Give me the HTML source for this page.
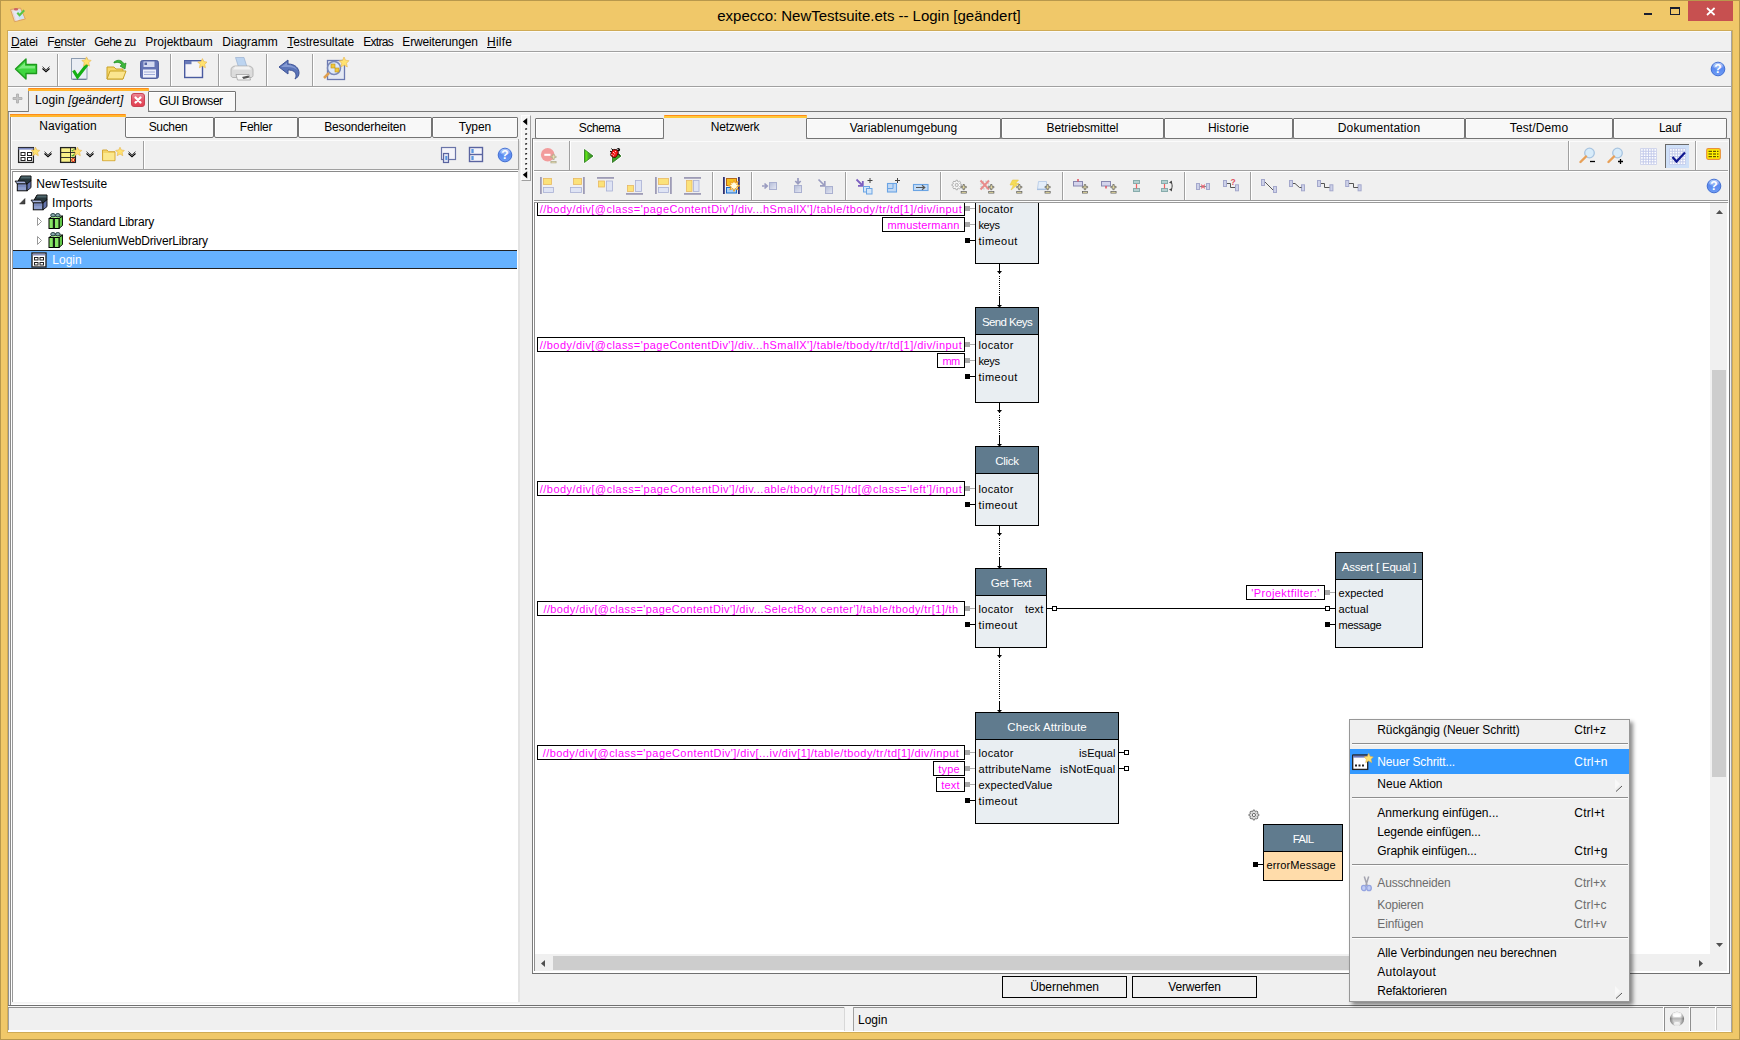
<!DOCTYPE html><html lang="de"><head><meta charset="utf-8"><title>expecco</title><style>
*{box-sizing:border-box;margin:0;padding:0}
html,body{width:1740px;height:1040px;overflow:hidden}
body{background:#f0c869;font-family:"Liberation Sans",sans-serif;font-size:12px;color:#000;position:relative}
.a{position:absolute}
.t{position:absolute;white-space:nowrap;line-height:14px;height:14px}
.u{text-decoration:underline}
.hl{position:absolute;height:1px}
.vl{position:absolute;width:1px}
.tab{position:absolute;border:1px solid #8a8a8a;border-bottom:none;background:#f7f7f7;text-align:center;white-space:nowrap}
.mag{color:#ee00ee}
.pin{position:absolute;white-space:nowrap;line-height:14px;height:14px;font-size:11px}
.box{position:absolute;border:1px solid #000;background:#fff;color:#f0f;white-space:nowrap;line-height:14px;font-size:11px;text-align:center}
.node{position:absolute;border:1px solid #000;background:#e9eef2}
.nh{position:absolute;left:0;top:0;right:0;background:#607b8e;color:#fff;text-align:center;border-bottom:1px solid #000;white-space:nowrap}
.mi{position:absolute;left:27.3px;white-space:nowrap;height:16px;line-height:16px}
.mk{position:absolute;left:224.3px;white-space:nowrap;height:16px;line-height:16px}
</style></head><body>
<div class="a" style="left:0px;top:0px;width:1740px;height:1040px;background:#b8984c;"></div>
<div class="a" style="left:1px;top:1px;width:1738px;height:1038px;background:#f0c869;"></div>
<div class="a" style="left:7px;top:30px;width:1726px;height:1003px;background:#cfab56;"></div>
<div class="a" style="left:8px;top:31px;width:1724px;height:1001px;background:#f0f0f0;"></div>
<div class="hl" style="left:8px;top:31px;width:1724px;background:#fbfbfb"></div>
<div class="t" style="left:-1px;top:7px;width:1740px;text-align:center;font-size:15px;line-height:18px;height:18px;letter-spacing:-0.02px">expecco: NewTestsuite.ets -- Login [geändert]</div>
<div class="a" style="left:1688px;top:1px;width:45px;height:20px;background:#c75050;"></div>
<svg class="a" style="left:1640px;top:0" width="100" height="22" viewBox="0 0 100 22"><rect x="4" y="13" width="8" height="2" fill="#1a1f30"/><rect x="30.500" y="8.500" width="9" height="6" fill="none" stroke="#1a1f30" stroke-width="1"/><rect x="30" y="7" width="10" height="2" fill="#1a1f30"/><path d="M67 8l7.600 7M74.600 8l-7.600 7" stroke="#fff" stroke-width="1.700"/></svg>
<svg class="a" style="left:8px;top:5px" width="20" height="18" viewBox="8 5 20 18"><path d="M10.500 9.500l10-1.500 4.800 11-10.800 2.700z" fill="#ead8cc" stroke="#dca060" stroke-width="1"/><path d="M13 11l7.500-1 3.800 8.300-8.300 2z" fill="#cfe4f6"/><path d="M13 11l4-0.500 2 9.500-2.700 0.600z" fill="#e6e6f2"/><ellipse cx="16" cy="9.300" rx="2.200" ry="1.300" fill="#cc6464"/><path d="M17.300 12.700l2.300 2.500 4.600-5" fill="none" stroke="#5cc444" stroke-width="2.100"/></svg>
<div class="t" style="left:11px;top:35px;letter-spacing:-0.263px;"><span class="u">D</span>atei</div>
<div class="t" style="left:47.3px;top:35px;letter-spacing:-0.382px;">F<span class="u">e</span>nster</div>
<div class="t" style="left:94.3px;top:35px;letter-spacing:-0.563px;">Gehe zu</div>
<div class="t" style="left:145.3px;top:35px;letter-spacing:0.004px;">Projektbaum</div>
<div class="t" style="left:222.3px;top:35px;letter-spacing:0.005px;">Diagramm</div>
<div class="t" style="left:287.3px;top:35px;letter-spacing:-0.101px;"><span class="u">T</span>estresultate</div>
<div class="t" style="left:363.3px;top:35px;letter-spacing:-0.717px;">Extras</div>
<div class="t" style="left:402.3px;top:35px;letter-spacing:-0.152px;">Erweiterungen</div>
<div class="t" style="left:487px;top:35px;letter-spacing:0.257px;"><span class="u">H</span>ilfe</div>
<div class="hl" style="left:8px;top:51px;width:1724px;background:#a0a0a0"></div>
<div class="hl" style="left:8px;top:52px;width:1724px;background:#ffffff"></div>
<div class="vl" style="left:57px;top:54px;height:32px;background:#a0a0a0"></div>
<div class="vl" style="left:58px;top:54px;height:32px;background:#ffffff"></div>
<div class="vl" style="left:170px;top:54px;height:32px;background:#a0a0a0"></div>
<div class="vl" style="left:171px;top:54px;height:32px;background:#ffffff"></div>
<div class="vl" style="left:218px;top:54px;height:32px;background:#a0a0a0"></div>
<div class="vl" style="left:219px;top:54px;height:32px;background:#ffffff"></div>
<div class="vl" style="left:266px;top:54px;height:32px;background:#a0a0a0"></div>
<div class="vl" style="left:267px;top:54px;height:32px;background:#ffffff"></div>
<div class="vl" style="left:312px;top:54px;height:32px;background:#a0a0a0"></div>
<div class="vl" style="left:313px;top:54px;height:32px;background:#ffffff"></div>
<div class="hl" style="left:8px;top:86px;width:1724px;background:#a0a0a0"></div>
<div class="hl" style="left:8px;top:87px;width:1724px;background:#ffffff"></div>
<svg class="a" style="left:0;top:0" width="0" height="0"><defs><linearGradient id="hg" x1="0" y1="0" x2="0" y2="1"><stop offset="0" stop-color="#8cb0f6"/><stop offset="0.450" stop-color="#5a8af0"/><stop offset="1" stop-color="#6e9cf4"/></linearGradient></defs></svg>
<svg class="a" style="left:14px;top:57px" width="24" height="24" viewBox="0 0 24 24"><path d="M1.5 12L12 2v5.5h10.5v9H12V22z" fill="#3fd63f" stroke="#1e9a1e" stroke-width="1.4" stroke-linejoin="round"/><path d="M4 12L11 5.5v3.5h10v2.5H8z" fill="#8df08d" opacity="0.8"/></svg>
<svg class="a" style="left:41.5px;top:65.5px" width="8" height="7" viewBox="0 0 8 7"><path d="M0.500 0.600l3.500 3.300 3.500-3.300" fill="none" stroke="#333" stroke-width="0.900"/><path d="M0.500 2.500l3.500 3.300 3.500-3.300" fill="none" stroke="#000" stroke-width="1.200"/></svg>
<svg class="a" style="left:69px;top:56px" width="24" height="26" viewBox="0 0 24 26"><rect x="2.500" y="2.500" width="15.500" height="20.500" fill="#e9edf4" stroke="#8d9cb0"/><path d="M17.500 23.500h-14" stroke="#70809a"/><path d="M4.500 14.500l4 6.500 10-13" fill="none" stroke="#14b014" stroke-width="3.200"/><path d="M17.5 0.9000000000000004l1.4 3.0 3.2 0.5-2.3 2.3 0.7 3.4-3.0-1.8-3.0 1.8 0.7-3.4-2.3-2.3 3.2-0.5z" fill="#ffe270" stroke="#e8b448" stroke-width="0.6"/></svg>
<svg class="a" style="left:105px;top:56px" width="24" height="26" viewBox="0 0 24 26"><path d="M2 11h7l2 2h7v10H2z" fill="#f6d76a" stroke="#c9a227"/><path d="M2 23l3-8h16l-3 8z" fill="#fbe58f" stroke="#c9a227"/><path d="M9 6c4-3 8-2 10 2l2-1-1 6-5-3 2-1c-2-3-5-3-8-2z" fill="#3cb83c" stroke="#1e8a1e" stroke-width="0.7"/></svg>
<svg class="a" style="left:140px;top:60px" width="19" height="19" viewBox="0 0 19 19"><rect x="0.600" y="0.600" width="17.800" height="17.800" rx="1.800" fill="#6474b4" stroke="#4a5a9a"/><rect x="3.500" y="1.500" width="11" height="5.500" fill="#d4daf0"/><rect x="3" y="9.500" width="13" height="8" fill="#eef0fa"/><path d="M4 12h11M4 14.500h11" stroke="#a0acd8"/><rect x="4.500" y="2.500" width="2.500" height="2.500" fill="#5464a4"/></svg>
<svg class="a" style="left:183px;top:56px" width="26" height="26" viewBox="0 0 26 26"><rect x="1.700" y="4.700" width="17.800" height="16.800" fill="#f6f4f8" stroke="#4a5aa0" stroke-width="1.400"/><rect x="2" y="5" width="6.500" height="3.200" fill="#6a7ab8"/><path d="M19.4 2.6000000000000005l1.4 3.0 3.2 0.5-2.3 2.3 0.7 3.4-3.0-1.8-3.0 1.8 0.7-3.4-2.3-2.3 3.2-0.5z" fill="#ffe270" stroke="#e8b448" stroke-width="0.6"/></svg>
<svg class="a" style="left:229px;top:56px" width="26" height="26" viewBox="0 0 26 26"><path d="M6.500 1.500h8.500l3 9.500H9.500z" fill="#bcd4f0" stroke="#9ab0d0" stroke-width="0.700"/><path d="M2 14c0-2.500 2-4 4.500-4h13c2.500 0 4.500 1.500 4.500 4v5.500c0 1-1 2-2 2H4c-1 0-2-1-2-2z" fill="#dcdcdc" stroke="#a8a8a8" stroke-width="0.800"/><path d="M6 10.500h14l2 3H4z" fill="#f2f2f2"/><path d="M7 18.500h13l1.500 5.500H8.500z" fill="#f6f6f6" stroke="#9a9a9a" stroke-width="0.700"/><path d="M13 21l6.500-1.500 1 2-6 1.500z" fill="#555"/></svg>
<svg class="a" style="left:278px;top:58px" width="24" height="24" viewBox="0 0 24 24"><path d="M1 9l9-7v4c7 0 11 4 11 9 0 3-2 5-4 6 1-2 1-3 1-4 0-3-3-5-8-5v4z" fill="#5a74b8" stroke="#3d5296" stroke-width="1" stroke-linejoin="round"/><path d="M3 9l6-4.5v2.500c5 0 9 2 10 5-2-2-5-3-10-3z" fill="#8fa4da" opacity="0.8"/></svg>
<svg class="a" style="left:322px;top:56px" width="28" height="26" viewBox="0 0 28 26"><rect x="5.500" y="4.500" width="17" height="19" fill="#e4e9f4" stroke="#6a78b0" stroke-width="1.300"/><circle cx="12" cy="12" r="6.500" fill="#dce8fa" fill-opacity="0.8" stroke="#7a88b8" stroke-width="1.500"/><path d="M7 17l-5 5" stroke="#e0a050" stroke-width="2.500"/><rect x="9" y="8" width="4" height="4" fill="#f2c83a" stroke="#b8901c" stroke-width="0.600"/><rect x="13" y="12" width="4" height="4" fill="#f2c83a" stroke="#b8901c" stroke-width="0.600"/><path d="M22 1l1.5 3.2 3.5 0.5-2.5 2.5 0.8 3.8-3.2-2.0-3.2 2.0 0.8-3.8-2.5-2.5 3.5-0.5z" fill="#ffe270" stroke="#e8b448" stroke-width="0.6"/></svg>
<svg class="a" style="left:1710px;top:61px" width="16" height="16" viewBox="0 0 16 16"><circle cx="8" cy="8" r="7.600" fill="#cfe6fc" opacity="0.700"/><circle cx="8" cy="8" r="6.800" fill="url(#hg)" stroke="#3e68cc" stroke-width="0.900"/><ellipse cx="8" cy="4.800" rx="4.800" ry="3" fill="#fff" opacity="0.300"/><text x="8" y="12.300" font-family="Liberation Sans,sans-serif" font-weight="bold" font-size="12" fill="#fff" text-anchor="middle">?</text></svg>
<svg class="a" style="left:12px;top:93px" width="11" height="11" viewBox="0 0 11 11"><path d="M4.500 1h2v3.500h3.500v2H6.500v3.500h-2V6.500H1v-2h3.500z" fill="#c4c4c4" stroke="#a8a8a8" stroke-width="0.800"/></svg>
<div class="hl" style="left:8px;top:111px;width:1723px;background:#787878"></div>
<div class="a" style="left:148px;top:91px;width:88px;height:21px;border:1px solid #747474;border-radius:1px 1px 2px 2px;background:#f8f8f8;box-shadow:inset 1px 1px 0 #ffffff"></div>
<div class="t" style="left:146.8px;top:94px;letter-spacing:-0.452px;width:88px;text-align:center">GUI Browser</div>
<div class="a" style="left:28px;top:90px;width:120px;height:22px;background:#f0f0f0;border-left:1px solid #8a8a8a"></div>
<div class="a" style="left:28px;top:88px;width:121px;height:1px;background:#ff8c1a;border-radius:2px 2px 0 0"></div>
<div class="a" style="left:28px;top:89px;width:121px;height:2px;background:#ffb62e;"></div>
<div class="t" style="left:35px;top:93px;letter-spacing:0.100px;">Login <i>[geändert]</i></div>
<svg class="a" style="left:131px;top:93px" width="14" height="14" viewBox="0 0 14 14"><defs><linearGradient id="cg" x1="0" y1="0" x2="0" y2="1"><stop offset="0" stop-color="#ec8a98"/><stop offset="0.5" stop-color="#e4566a"/><stop offset="1" stop-color="#e2404e"/></linearGradient></defs><rect x="0.500" y="0.500" width="13" height="13" rx="2.500" fill="url(#cg)" stroke="#c84454"/><path d="M4.500 4.500l5 5M9.500 4.500l-5 5" stroke="#fff" stroke-width="2.300" stroke-linecap="round"/></svg>
<div class="vl" style="left:8px;top:112px;height:894px;background:#909090"></div>
<div class="vl" style="left:10px;top:114px;height:891px;background:#8a8a8a"></div>
<div class="hl" style="left:8px;top:1005px;width:1723px;background:#6a6a6a"></div>
<div class="a" style="left:125px;top:117px;width:89px;height:21px;border:1px solid #747474;border-radius:1px 1px 2px 2px;background:#f8f8f8;box-shadow:inset 1px 1px 0 #ffffff"></div>
<div class="t" style="left:123.5px;top:120px;letter-spacing:-0.331px;width:89px;text-align:center">Suchen</div>
<div class="a" style="left:214px;top:117px;width:84px;height:21px;border:1px solid #747474;border-radius:1px 1px 2px 2px;background:#f8f8f8;box-shadow:inset 1px 1px 0 #ffffff"></div>
<div class="t" style="left:214px;top:120px;letter-spacing:-0.286px;width:84px;text-align:center">Fehler</div>
<div class="a" style="left:298px;top:117px;width:134px;height:21px;border:1px solid #747474;border-radius:1px 1px 2px 2px;background:#f8f8f8;box-shadow:inset 1px 1px 0 #ffffff"></div>
<div class="t" style="left:298px;top:120px;letter-spacing:-0.168px;width:134px;text-align:center">Besonderheiten</div>
<div class="a" style="left:432px;top:117px;width:86px;height:21px;border:1px solid #747474;border-radius:1px 1px 2px 2px;background:#f8f8f8;box-shadow:inset 1px 1px 0 #ffffff"></div>
<div class="t" style="left:432px;top:120px;letter-spacing:-0.058px;width:86px;text-align:center">Typen</div>
<div class="a" style="left:11px;top:117px;width:114px;height:22px;background:#f0f0f0;"></div>
<div class="a" style="left:10px;top:114px;width:116px;height:1px;background:#ff8c1a;border-radius:2px 2px 0 0"></div>
<div class="a" style="left:10px;top:115px;width:116px;height:2px;background:#ffb62e;"></div>
<div class="t" style="left:10px;top:119px;letter-spacing:0.070px;width:116px;text-align:center">Navigation</div>
<div class="vl" style="left:11px;top:117px;height:888px;background:#ffffff"></div>
<div class="vl" style="left:143px;top:141px;height:28px;background:#a0a0a0"></div>
<div class="vl" style="left:144px;top:141px;height:28px;background:#ffffff"></div>
<div class="hl" style="left:11px;top:169px;width:508px;background:#a0a0a0"></div>
<div class="hl" style="left:11px;top:170px;width:508px;background:#ffffff"></div>
<div class="hl" style="left:12px;top:171px;width:506px;background:#8a8a8a"></div>
<div class="a" style="left:13px;top:172px;width:505px;height:830px;background:#ffffff;"></div>
<div class="vl" style="left:12px;top:171px;height:831px;background:#999999"></div>
<div class="a" style="left:518px;top:141px;width:2px;height:862px;background:#e3e3e3;"></div>
<div class="hl" style="left:11px;top:1002px;width:509px;background:#f4f4f4"></div>
<div class="hl" style="left:11px;top:1003px;width:509px;background:#f8f8f8"></div>
<div class="hl" style="left:11px;top:1004px;width:509px;background:#ffffff"></div>
<div class="hl" style="left:12px;top:140px;width:506px;background:#fbfbfb"></div>
<svg class="a" style="left:17px;top:146px" width="24" height="18" viewBox="0 0 24 18"><rect x="1.600" y="1.600" width="14.800" height="14.800" fill="#fff" stroke="#222" stroke-width="1.300"/><rect x="1.500" y="1.300" width="15" height="2.300" fill="#7c88c0"/><rect x="1" y="1" width="16" height="0.800" fill="#222"/><rect x="4" y="6.500" width="4" height="3" fill="#fff" stroke="#222"/><rect x="10.500" y="6.500" width="4" height="3" fill="#fff" stroke="#222"/><rect x="4" y="11.500" width="4" height="3" fill="#fff" stroke="#222"/><rect x="10.500" y="11.500" width="4" height="3" fill="#fff" stroke="#222"/><path d="M18.5 1.2000000000000002l1.3 2.8 3.0 0.4-2.1 2.1 0.6 3.2-2.8-1.7-2.8 1.7 0.6-3.2-2.1-2.1 3.0-0.4z" fill="#ffe270" stroke="#e8b448" stroke-width="0.6"/></svg>
<svg class="a" style="left:43.5px;top:151px" width="8" height="7" viewBox="0 0 8 7"><path d="M0.500 0.600l3.500 3.300 3.500-3.300" fill="none" stroke="#333" stroke-width="0.900"/><path d="M0.500 2.500l3.500 3.300 3.500-3.300" fill="none" stroke="#000" stroke-width="1.200"/></svg>
<svg class="a" style="left:59px;top:146px" width="24" height="18" viewBox="0 0 24 18"><rect x="1.600" y="1.600" width="14.800" height="14.800" fill="#f8f088" stroke="#222" stroke-width="1.300"/><path d="M1.500 6.500h15M1.500 11.500h15M11.500 1.500v15" stroke="#222" stroke-width="0.900"/><path d="M12.800 4l1 1.200 1.700-2.400M12.800 9l1 1.200 1.700-2.400" stroke="#1a9a1a" stroke-width="1" fill="none"/><circle cx="14.200" cy="14" r="1.500" fill="none" stroke="#e01010" stroke-width="1"/><path d="M18.5 1.2000000000000002l1.3 2.8 3.0 0.4-2.1 2.1 0.6 3.2-2.8-1.7-2.8 1.7 0.6-3.2-2.1-2.1 3.0-0.4z" fill="#ffe270" stroke="#e8b448" stroke-width="0.6"/></svg>
<svg class="a" style="left:85.5px;top:151px" width="8" height="7" viewBox="0 0 8 7"><path d="M0.500 0.600l3.500 3.300 3.500-3.300" fill="none" stroke="#333" stroke-width="0.900"/><path d="M0.500 2.500l3.500 3.300 3.500-3.300" fill="none" stroke="#000" stroke-width="1.200"/></svg>
<svg class="a" style="left:101px;top:146px" width="26" height="18" viewBox="0 0 26 18"><path d="M1.500 4h4.500l1.500 1.700h6.500v9H1.500z" fill="#f4d466" stroke="#d4a838"/><path d="M2.300 7h11v7.200h-11z" fill="#fbe88e"/><path d="M19 1.2000000000000002l1.3 2.8 3.0 0.4-2.1 2.1 0.6 3.2-2.8-1.7-2.8 1.7 0.6-3.2-2.1-2.1 3.0-0.4z" fill="#ffe270" stroke="#e8b448" stroke-width="0.6"/></svg>
<svg class="a" style="left:127.5px;top:151px" width="8" height="7" viewBox="0 0 8 7"><path d="M0.500 0.600l3.500 3.300 3.500-3.300" fill="none" stroke="#333" stroke-width="0.900"/><path d="M0.500 2.500l3.500 3.300 3.500-3.300" fill="none" stroke="#000" stroke-width="1.200"/></svg>
<svg class="a" style="left:440px;top:146px" width="18" height="18" viewBox="0 0 18 18"><rect x="1.500" y="1.500" width="14" height="12" fill="#f4f4fa" stroke="#6a74a8" stroke-width="1.200"/><rect x="3.500" y="7.500" width="5" height="9" fill="#dfe4f4" stroke="#5a64a0" stroke-width="1.200"/><path d="M6 10v4M6 11h1.500M6 13h1.500" stroke="#2a78d8"/></svg>
<svg class="a" style="left:468px;top:146px" width="16" height="18" viewBox="0 0 16 18"><rect x="1.500" y="1.500" width="13" height="14" fill="#f4f4fa" stroke="#5a64a0" stroke-width="1.400"/><path d="M1.500 8.500h13" stroke="#5a64a0" stroke-width="1.400"/><path d="M4 3v4M4 4h2M4 6h2M4 10v4M4 11h2M4 13h2" stroke="#2a78d8"/></svg>
<svg class="a" style="left:497px;top:147px" width="16" height="16" viewBox="0 0 16 16"><circle cx="8" cy="8" r="7.600" fill="#cfe6fc" opacity="0.700"/><circle cx="8" cy="8" r="6.800" fill="url(#hg)" stroke="#3e68cc" stroke-width="0.900"/><ellipse cx="8" cy="4.800" rx="4.800" ry="3" fill="#fff" opacity="0.300"/><text x="8" y="12.300" font-family="Liberation Sans,sans-serif" font-weight="bold" font-size="12" fill="#fff" text-anchor="middle">?</text></svg>
<svg class="a" style="left:14px;top:175px" width="19" height="19" viewBox="0 0 19 19"><path d="M7 1h10v5l-4 3.300H5.500l-1.500-3z" fill="#26363c" stroke="#0c0c0c" stroke-width="1"/><path d="M7.500 1.500h9v2h-10z" fill="#4c646a"/><path d="M1 6.100h9.700l2.300 2.900H3.300z" fill="#a6b4de" stroke="#0c0c0c" stroke-width="0.900"/><rect x="3.300" y="9" width="9.700" height="6.800" fill="#8e9ecc" stroke="#0c0c0c" stroke-width="1"/><path d="M4 9.700h8.300v2.500H4z" fill="#7c8cbe"/><path d="M13 9l4-3.300v6.900l-4 3.200z" fill="#6272aa" stroke="#0c0c0c" stroke-width="0.900"/></svg>
<div class="t" style="left:36.3px;top:177px;letter-spacing:-0.055px;">NewTestsuite</div>
<svg class="a" style="left:19px;top:198px" width="7" height="7" viewBox="0 0 7 7"><path d="M6 0.500v5.500H0.500z" fill="#444" stroke="#2a2a2a" stroke-width="0.500"/></svg>
<svg class="a" style="left:30px;top:194px" width="19" height="19" viewBox="0 0 19 19"><path d="M7 1h10v5l-4 3.300H5.500l-1.500-3z" fill="#26363c" stroke="#0c0c0c" stroke-width="1"/><path d="M7.500 1.500h9v2h-10z" fill="#4c646a"/><path d="M1 6.100h9.700l2.300 2.900H3.300z" fill="#a6b4de" stroke="#0c0c0c" stroke-width="0.900"/><rect x="3.300" y="9" width="9.700" height="6.800" fill="#8e9ecc" stroke="#0c0c0c" stroke-width="1"/><path d="M4 9.700h8.300v2.500H4z" fill="#7c8cbe"/><path d="M13 9l4-3.300v6.900l-4 3.200z" fill="#6272aa" stroke="#0c0c0c" stroke-width="0.900"/></svg>
<div class="t" style="left:52px;top:196px;letter-spacing:0.100px;">Imports</div>
<svg class="a" style="left:37px;top:217px" width="6" height="9" viewBox="0 0 6 9"><path d="M0.500 0.500l4 4-4 4z" fill="#fff" stroke="#9a9a9a"/></svg>
<svg class="a" style="left:48px;top:212px" width="16" height="18" viewBox="0 0 16 18"><path d="M11 6.500l3.500-2.500v9.500l-3.500 3z" fill="#62c848" stroke="#000" stroke-width="0.900"/><path d="M1 6.500l3.500-2.500h10l-3.500 2.500z" fill="#b0f490" stroke="#000" stroke-width="0.900"/><rect x="1" y="6.500" width="10" height="10" fill="#86e664" stroke="#000" stroke-width="1"/><rect x="4.800" y="6.500" width="2.200" height="10" fill="#142014"/><ellipse cx="5" cy="3.200" rx="2.300" ry="1.700" fill="#86a8ac" stroke="#1c3438" stroke-width="0.900"/><ellipse cx="9.800" cy="3.200" rx="2.300" ry="1.700" fill="#86a8ac" stroke="#1c3438" stroke-width="0.900"/></svg>
<div class="t" style="left:68.3px;top:215px;letter-spacing:-0.188px;">Standard Library</div>
<svg class="a" style="left:37px;top:236px" width="6" height="9" viewBox="0 0 6 9"><path d="M0.500 0.500l4 4-4 4z" fill="#fff" stroke="#9a9a9a"/></svg>
<svg class="a" style="left:48px;top:231px" width="16" height="18" viewBox="0 0 16 18"><path d="M11 6.500l3.500-2.500v9.500l-3.500 3z" fill="#62c848" stroke="#000" stroke-width="0.900"/><path d="M1 6.500l3.500-2.500h10l-3.500 2.500z" fill="#b0f490" stroke="#000" stroke-width="0.900"/><rect x="1" y="6.500" width="10" height="10" fill="#86e664" stroke="#000" stroke-width="1"/><rect x="4.800" y="6.500" width="2.200" height="10" fill="#142014"/><ellipse cx="5" cy="3.200" rx="2.300" ry="1.700" fill="#86a8ac" stroke="#1c3438" stroke-width="0.900"/><ellipse cx="9.800" cy="3.200" rx="2.300" ry="1.700" fill="#86a8ac" stroke="#1c3438" stroke-width="0.900"/></svg>
<div class="t" style="left:68.3px;top:234px;letter-spacing:-0.145px;">SeleniumWebDriverLibrary</div>
<div class="a" style="left:13px;top:250px;width:504px;height:19px;background:#66b2ff;border-top:1px solid #222;border-bottom:1px solid #222"></div>
<svg class="a" style="left:31px;top:252px" width="16" height="16" viewBox="0 0 16 16"><rect x="1" y="1" width="14" height="14" fill="#fff" stroke="#222" stroke-width="1.400"/><rect x="1.700" y="1.700" width="12.600" height="1.800" fill="#8a94c0"/><rect x="3.500" y="5.500" width="3.500" height="2.500" fill="#fff" stroke="#222"/><rect x="9" y="5.500" width="3.500" height="2.500" fill="#fff" stroke="#222"/><rect x="3.500" y="10.500" width="3.500" height="2.500" fill="#fff" stroke="#222"/><rect x="9" y="10.500" width="3.500" height="2.500" fill="#fff" stroke="#222"/></svg>
<div class="t" style="left:52.3px;top:253px;letter-spacing:0.008px;color:#fff">Login</div>
<div class="vl" style="left:518px;top:139px;height:31px;background:#a4a4a4"></div>
<div class="a" style="left:521px;top:115px;width:10px;height:66px;background:#f5f5f5;border-right:1px solid #a0a0a0;border-bottom:1px solid #a0a0a0;border-left:1px solid #fdfdfd;border-top:1px solid #fdfdfd"></div>
<svg class="a" style="left:521px;top:115px" width="10" height="66" viewBox="0 0 10 66"><path d="M6.200 3v7.200L1.800 6.600zM6.200 56.200v7.200L1.800 59.800z" fill="#000"/><rect x="4.300" y="13.2" width="1.800" height="1.800" fill="#222"/><rect x="5.300" y="14.5" width="1.200" height="1" fill="#fff"/><rect x="4.300" y="18.2" width="1.800" height="1.800" fill="#222"/><rect x="5.300" y="19.5" width="1.200" height="1" fill="#fff"/><rect x="4.300" y="23.1" width="1.800" height="1.800" fill="#222"/><rect x="5.300" y="24.4" width="1.200" height="1" fill="#fff"/><rect x="4.300" y="28.1" width="1.800" height="1.800" fill="#222"/><rect x="5.300" y="29.4" width="1.200" height="1" fill="#fff"/><rect x="4.300" y="33.1" width="1.800" height="1.800" fill="#222"/><rect x="5.300" y="34.4" width="1.200" height="1" fill="#fff"/><rect x="4.300" y="38.0" width="1.800" height="1.800" fill="#222"/><rect x="5.300" y="39.3" width="1.200" height="1" fill="#fff"/><rect x="4.300" y="43.0" width="1.800" height="1.800" fill="#222"/><rect x="5.300" y="44.3" width="1.200" height="1" fill="#fff"/><rect x="4.300" y="48.0" width="1.800" height="1.800" fill="#222"/><rect x="5.300" y="49.3" width="1.200" height="1" fill="#fff"/><rect x="4.300" y="53.0" width="1.800" height="1.800" fill="#222"/><rect x="5.300" y="54.3" width="1.200" height="1" fill="#fff"/></svg>
<div class="hl" style="left:532px;top:138px;width:1198px;background:#8a8a8a"></div>
<div class="vl" style="left:532px;top:138px;height:836px;background:#7c7c7c"></div>
<div class="vl" style="left:533px;top:139px;height:834px;background:#ffffff"></div>
<div class="vl" style="left:1729px;top:138px;height:836px;background:#707070"></div>
<div class="vl" style="left:1728px;top:140px;height:62px;background:#fafafa"></div>
<div class="hl" style="left:534px;top:141px;width:1194px;background:#fbfbfb"></div>
<div class="a" style="left:535px;top:118px;width:129px;height:21px;border:1px solid #747474;border-radius:1px 1px 2px 2px;background:#f8f8f8;box-shadow:inset 1px 1px 0 #ffffff"></div>
<div class="t" style="left:535px;top:121px;letter-spacing:-0.453px;width:129px;text-align:center">Schema</div>
<div class="a" style="left:806px;top:118px;width:195px;height:21px;border:1px solid #747474;border-radius:1px 1px 2px 2px;background:#f8f8f8;box-shadow:inset 1px 1px 0 #ffffff"></div>
<div class="t" style="left:806px;top:121px;letter-spacing:0.070px;width:195px;text-align:center">Variablenumgebung</div>
<div class="a" style="left:1001px;top:118px;width:163px;height:21px;border:1px solid #747474;border-radius:1px 1px 2px 2px;background:#f8f8f8;box-shadow:inset 1px 1px 0 #ffffff"></div>
<div class="t" style="left:1001px;top:121px;letter-spacing:-0.049px;width:163px;text-align:center">Betriebsmittel</div>
<div class="a" style="left:1164px;top:118px;width:129px;height:21px;border:1px solid #747474;border-radius:1px 1px 2px 2px;background:#f8f8f8;box-shadow:inset 1px 1px 0 #ffffff"></div>
<div class="t" style="left:1164px;top:121px;letter-spacing:0.064px;width:129px;text-align:center">Historie</div>
<div class="a" style="left:1293px;top:118px;width:172px;height:21px;border:1px solid #747474;border-radius:1px 1px 2px 2px;background:#f8f8f8;box-shadow:inset 1px 1px 0 #ffffff"></div>
<div class="t" style="left:1293px;top:121px;letter-spacing:0.131px;width:172px;text-align:center">Dokumentation</div>
<div class="a" style="left:1465px;top:118px;width:148px;height:21px;border:1px solid #747474;border-radius:1px 1px 2px 2px;background:#f8f8f8;box-shadow:inset 1px 1px 0 #ffffff"></div>
<div class="t" style="left:1465px;top:121px;letter-spacing:0.117px;width:148px;text-align:center">Test/Demo</div>
<div class="a" style="left:1613px;top:118px;width:114px;height:21px;border:1px solid #747474;border-radius:1px 1px 2px 2px;background:#f8f8f8;box-shadow:inset 1px 1px 0 #ffffff"></div>
<div class="t" style="left:1613px;top:121px;letter-spacing:-0.336px;width:114px;text-align:center">Lauf</div>
<div class="a" style="left:664px;top:118px;width:142px;height:21px;background:#f0f0f0;"></div>
<div class="a" style="left:664px;top:115px;width:143px;height:1px;background:#ff8c1a;border-radius:2px 2px 0 0"></div>
<div class="a" style="left:664px;top:116px;width:143px;height:2px;background:#ffc83a;"></div>
<div class="t" style="left:663px;top:120px;letter-spacing:-0.164px;width:144px;text-align:center">Netzwerk</div>
<div class="hl" style="left:534px;top:170px;width:1194px;background:#a0a0a0"></div>
<div class="hl" style="left:534px;top:171px;width:1194px;background:#ffffff"></div>
<div class="hl" style="left:534px;top:200px;width:1194px;background:#999999"></div>
<div class="hl" style="left:534px;top:201px;width:1194px;background:#ffffff"></div>
<div class="vl" style="left:569px;top:141px;height:29px;background:#a0a0a0"></div>
<div class="vl" style="left:570px;top:141px;height:29px;background:#ffffff"></div>
<div class="vl" style="left:1568px;top:141px;height:29px;background:#a0a0a0"></div>
<div class="vl" style="left:1569px;top:141px;height:29px;background:#ffffff"></div>
<div class="vl" style="left:1695px;top:141px;height:29px;background:#a0a0a0"></div>
<div class="vl" style="left:1696px;top:141px;height:29px;background:#ffffff"></div>
<div class="vl" style="left:712px;top:172px;height:28px;background:#a0a0a0"></div>
<div class="vl" style="left:713px;top:172px;height:28px;background:#ffffff"></div>
<div class="vl" style="left:751px;top:172px;height:28px;background:#a0a0a0"></div>
<div class="vl" style="left:752px;top:172px;height:28px;background:#ffffff"></div>
<div class="vl" style="left:845px;top:172px;height:28px;background:#a0a0a0"></div>
<div class="vl" style="left:846px;top:172px;height:28px;background:#ffffff"></div>
<div class="vl" style="left:940px;top:172px;height:28px;background:#a0a0a0"></div>
<div class="vl" style="left:941px;top:172px;height:28px;background:#ffffff"></div>
<div class="vl" style="left:1062px;top:172px;height:28px;background:#a0a0a0"></div>
<div class="vl" style="left:1063px;top:172px;height:28px;background:#ffffff"></div>
<div class="vl" style="left:1184px;top:172px;height:28px;background:#a0a0a0"></div>
<div class="vl" style="left:1185px;top:172px;height:28px;background:#ffffff"></div>
<div class="vl" style="left:1250px;top:172px;height:28px;background:#a0a0a0"></div>
<div class="vl" style="left:1251px;top:172px;height:28px;background:#ffffff"></div>
<svg class="a" style="left:540px;top:147px" width="18" height="18" viewBox="540 147 18 18"><circle cx="547.700" cy="154.800" r="6.800" fill="#f29c9c"/><rect x="544.300" y="153.800" width="6.200" height="2" fill="#fff"/><path d="M552.8 154.3h1.400v1.900h1.900v1.400h-1.900v1.900h-1.400v-1.900h-1.900v-1.400h1.900z" fill="#f4ecb4" stroke="#a8a488" stroke-width="0.700"/><rect x="550.9" y="161.4" width="5.200" height="1.500" fill="#f4ecb4" stroke="#a8a488" stroke-width="0.700"/></svg>
<svg class="a" style="left:582px;top:147px" width="14" height="18" viewBox="582 147 14 18"><defs><linearGradient id="pg" x1="0" y1="0" x2="1" y2="0"><stop offset="0" stop-color="#2c8a1c"/><stop offset="0.180" stop-color="#62ee12"/><stop offset="0.450" stop-color="#4aac2a"/><stop offset="1" stop-color="#2e8e1e"/></linearGradient></defs><path d="M584.500 149.500L593 156l-8.500 6.500z" fill="url(#pg)" stroke="#fff" stroke-width="2.200" stroke-linejoin="round"/><path d="M584.500 149.500L593 156l-8.500 6.500z" fill="url(#pg)" stroke="#2a7a1a" stroke-width="0.800" stroke-linejoin="round"/></svg>
<svg class="a" style="left:606px;top:145px" width="18" height="20" viewBox="606 145 18 20"><path d="M612.500 149.500l8.500 6.500-8.500 6.500z" fill="#3e9e26" stroke="#fff" stroke-width="2.200" stroke-linejoin="round"/><path d="M612.500 149.500l8.500 6.500-8.500 6.500z" fill="#3e9e26" stroke="#226a16" stroke-width="0.800" stroke-linejoin="round"/><path d="M610 151.300l2.500 0.700M611.300 148.600l1.800 1.600M611 155.500l1-1M618.500 153.500l1 2" stroke="#000" stroke-width="1"/><circle cx="618.300" cy="149.700" r="1.800" fill="#000"/><circle cx="617.800" cy="149.300" r="0.600" fill="#fff"/><ellipse cx="614.500" cy="153.400" rx="3.500" ry="4.200" transform="rotate(30 614.500 153.400)" fill="#f01414" stroke="#1a0000" stroke-width="0.700"/><circle cx="615.600" cy="151.500" r="0.550" fill="#fff"/><circle cx="613.600" cy="152.500" r="0.550" fill="#fff"/><circle cx="614.700" cy="153.700" r="0.550" fill="#fff"/><circle cx="611.900" cy="154.600" r="0.550" fill="#fff"/><circle cx="613.600" cy="155.700" r="0.550" fill="#fff"/></svg>
<svg class="a" style="left:1579px;top:147px" width="20" height="18" viewBox="0 0 20 18"><circle cx="10.500" cy="6" r="4.800" fill="#d8ecfa" stroke="#a8c4e0" stroke-width="1.300"/><path d="M7 9.500L1.500 15" stroke="#e8a058" stroke-width="2.400" stroke-linecap="round"/><path d="M11 14.500h5" stroke="#000" stroke-width="1.300"/></svg>
<svg class="a" style="left:1607px;top:147px" width="20" height="18" viewBox="0 0 20 18"><circle cx="10.500" cy="6" r="4.800" fill="#d8ecfa" stroke="#a8c4e0" stroke-width="1.300"/><path d="M7 9.500L1.500 15" stroke="#e8a058" stroke-width="2.400" stroke-linecap="round"/><path d="M11 14.500h5M13.500 12v5" stroke="#000" stroke-width="1.300"/></svg>
<svg class="a" style="left:1640px;top:148px" width="17" height="17" viewBox="0 0 17 17"><rect x="0.300" y="0.300" width="16.400" height="16.400" fill="#c2c9ea"/><rect x="1.10" y="1.10" width="1.650" height="1.650" fill="#fff"/><rect x="1.10" y="3.75" width="1.650" height="1.650" fill="#fff"/><rect x="1.10" y="6.40" width="1.650" height="1.650" fill="#fff"/><rect x="1.10" y="9.05" width="1.650" height="1.650" fill="#fff"/><rect x="1.10" y="11.70" width="1.650" height="1.650" fill="#fff"/><rect x="1.10" y="14.35" width="1.650" height="1.650" fill="#fff"/><rect x="3.75" y="1.10" width="1.650" height="1.650" fill="#fff"/><rect x="3.75" y="3.75" width="1.650" height="1.650" fill="#fff"/><rect x="3.75" y="6.40" width="1.650" height="1.650" fill="#fff"/><rect x="3.75" y="9.05" width="1.650" height="1.650" fill="#fff"/><rect x="3.75" y="11.70" width="1.650" height="1.650" fill="#fff"/><rect x="3.75" y="14.35" width="1.650" height="1.650" fill="#fff"/><rect x="6.40" y="1.10" width="1.650" height="1.650" fill="#fff"/><rect x="6.40" y="3.75" width="1.650" height="1.650" fill="#fff"/><rect x="6.40" y="6.40" width="1.650" height="1.650" fill="#fff"/><rect x="6.40" y="9.05" width="1.650" height="1.650" fill="#fff"/><rect x="6.40" y="11.70" width="1.650" height="1.650" fill="#fff"/><rect x="6.40" y="14.35" width="1.650" height="1.650" fill="#fff"/><rect x="9.05" y="1.10" width="1.650" height="1.650" fill="#fff"/><rect x="9.05" y="3.75" width="1.650" height="1.650" fill="#fff"/><rect x="9.05" y="6.40" width="1.650" height="1.650" fill="#fff"/><rect x="9.05" y="9.05" width="1.650" height="1.650" fill="#fff"/><rect x="9.05" y="11.70" width="1.650" height="1.650" fill="#fff"/><rect x="9.05" y="14.35" width="1.650" height="1.650" fill="#fff"/><rect x="11.70" y="1.10" width="1.650" height="1.650" fill="#fff"/><rect x="11.70" y="3.75" width="1.650" height="1.650" fill="#fff"/><rect x="11.70" y="6.40" width="1.650" height="1.650" fill="#fff"/><rect x="11.70" y="9.05" width="1.650" height="1.650" fill="#fff"/><rect x="11.70" y="11.70" width="1.650" height="1.650" fill="#fff"/><rect x="11.70" y="14.35" width="1.650" height="1.650" fill="#fff"/><rect x="14.35" y="1.10" width="1.650" height="1.650" fill="#fff"/><rect x="14.35" y="3.75" width="1.650" height="1.650" fill="#fff"/><rect x="14.35" y="6.40" width="1.650" height="1.650" fill="#fff"/><rect x="14.35" y="9.05" width="1.650" height="1.650" fill="#fff"/><rect x="14.35" y="11.70" width="1.650" height="1.650" fill="#fff"/><rect x="14.35" y="14.35" width="1.650" height="1.650" fill="#fff"/></svg>
<div class="a" style="left:1665px;top:144px;width:24px;height:24px;background:#cfe0f8;border-left:1px solid #6a6a6a;border-top:1px solid #6a6a6a"></div>
<svg class="a" style="left:1669px;top:148px" width="17" height="17" viewBox="0 0 17 17"><rect x="0.300" y="0.300" width="16.400" height="16.400" fill="#c2c9ea"/><rect x="1.10" y="1.10" width="1.650" height="1.650" fill="#fff"/><rect x="1.10" y="3.75" width="1.650" height="1.650" fill="#fff"/><rect x="1.10" y="6.40" width="1.650" height="1.650" fill="#fff"/><rect x="1.10" y="9.05" width="1.650" height="1.650" fill="#fff"/><rect x="1.10" y="11.70" width="1.650" height="1.650" fill="#fff"/><rect x="1.10" y="14.35" width="1.650" height="1.650" fill="#fff"/><rect x="3.75" y="1.10" width="1.650" height="1.650" fill="#fff"/><rect x="3.75" y="3.75" width="1.650" height="1.650" fill="#fff"/><rect x="3.75" y="6.40" width="1.650" height="1.650" fill="#fff"/><rect x="3.75" y="9.05" width="1.650" height="1.650" fill="#fff"/><rect x="3.75" y="11.70" width="1.650" height="1.650" fill="#fff"/><rect x="3.75" y="14.35" width="1.650" height="1.650" fill="#fff"/><rect x="6.40" y="1.10" width="1.650" height="1.650" fill="#fff"/><rect x="6.40" y="3.75" width="1.650" height="1.650" fill="#fff"/><rect x="6.40" y="6.40" width="1.650" height="1.650" fill="#fff"/><rect x="6.40" y="9.05" width="1.650" height="1.650" fill="#fff"/><rect x="6.40" y="11.70" width="1.650" height="1.650" fill="#fff"/><rect x="6.40" y="14.35" width="1.650" height="1.650" fill="#fff"/><rect x="9.05" y="1.10" width="1.650" height="1.650" fill="#fff"/><rect x="9.05" y="3.75" width="1.650" height="1.650" fill="#fff"/><rect x="9.05" y="6.40" width="1.650" height="1.650" fill="#fff"/><rect x="9.05" y="9.05" width="1.650" height="1.650" fill="#fff"/><rect x="9.05" y="11.70" width="1.650" height="1.650" fill="#fff"/><rect x="9.05" y="14.35" width="1.650" height="1.650" fill="#fff"/><rect x="11.70" y="1.10" width="1.650" height="1.650" fill="#fff"/><rect x="11.70" y="3.75" width="1.650" height="1.650" fill="#fff"/><rect x="11.70" y="6.40" width="1.650" height="1.650" fill="#fff"/><rect x="11.70" y="9.05" width="1.650" height="1.650" fill="#fff"/><rect x="11.70" y="11.70" width="1.650" height="1.650" fill="#fff"/><rect x="11.70" y="14.35" width="1.650" height="1.650" fill="#fff"/><rect x="14.35" y="1.10" width="1.650" height="1.650" fill="#fff"/><rect x="14.35" y="3.75" width="1.650" height="1.650" fill="#fff"/><rect x="14.35" y="6.40" width="1.650" height="1.650" fill="#fff"/><rect x="14.35" y="9.05" width="1.650" height="1.650" fill="#fff"/><rect x="14.35" y="11.70" width="1.650" height="1.650" fill="#fff"/><rect x="14.35" y="14.35" width="1.650" height="1.650" fill="#fff"/><path d="M3.500 9l4 4.500 8.500-9" fill="none" stroke="#101890" stroke-width="2.200"/></svg>
<svg class="a" style="left:1706px;top:148px" width="15" height="12" viewBox="0 0 15 12"><rect x="0.700" y="0.700" width="13.600" height="10.600" rx="1.500" fill="#fff200" stroke="#e8903a" stroke-width="1.200"/><path d="M2.500 3.300h10M2.500 6h10M2.500 8.700h10" stroke="#403000" stroke-width="1" stroke-dasharray="3.500 1 3 1"/></svg>
<svg class="a" style="left:1706px;top:178px" width="16" height="16" viewBox="0 0 16 16"><circle cx="8" cy="8" r="7.600" fill="#cfe6fc" opacity="0.700"/><circle cx="8" cy="8" r="6.800" fill="url(#hg)" stroke="#3e68cc" stroke-width="0.900"/><ellipse cx="8" cy="4.800" rx="4.800" ry="3" fill="#fff" opacity="0.300"/><text x="8" y="12.300" font-family="Liberation Sans,sans-serif" font-weight="bold" font-size="12" fill="#fff" text-anchor="middle">?</text></svg>
<svg class="a" style="left:539px;top:176px" width="18" height="20" viewBox="0 0 18 20"><rect x="1" y="1" width="1.800" height="17" fill="#9e9cb6"/><rect x="4.500" y="2.500" width="8" height="6" fill="#fbe27a" stroke="#e8b860" stroke-width="0.800"/><rect x="4.500" y="11.500" width="10" height="5" fill="#dfe4f4" stroke="#a8b0d4" stroke-width="0.800"/></svg>
<svg class="a" style="left:568px;top:176px" width="18" height="20" viewBox="0 0 18 20"><rect x="15" y="1" width="1.800" height="17" fill="#9e9cb6"/><rect x="5.500" y="2.500" width="8" height="6" fill="#fbe27a" stroke="#e8b860" stroke-width="0.800"/><rect x="2.500" y="11.500" width="11" height="5" fill="#dfe4f4" stroke="#a8b0d4" stroke-width="0.800"/></svg>
<svg class="a" style="left:596px;top:176px" width="20" height="20" viewBox="0 0 20 20"><rect x="1" y="1" width="17" height="1.800" fill="#9e9cb6"/><rect x="2.500" y="5" width="6" height="6" fill="#fbe27a" stroke="#e8b860" stroke-width="0.800"/><rect x="10.500" y="5" width="6" height="10" fill="#dfe4f4" stroke="#a8b0d4" stroke-width="0.800"/></svg>
<svg class="a" style="left:625px;top:176px" width="20" height="20" viewBox="0 0 20 20"><rect x="1" y="17" width="17" height="1.800" fill="#9e9cb6"/><rect x="2.500" y="9.500" width="6" height="6" fill="#fbe27a" stroke="#e8b860" stroke-width="0.800"/><rect x="10.500" y="4.500" width="6" height="11" fill="#dfe4f4" stroke="#a8b0d4" stroke-width="0.800"/></svg>
<svg class="a" style="left:654px;top:176px" width="20" height="20" viewBox="0 0 20 20"><rect x="1" y="1" width="1.800" height="17" fill="#9e9cb6"/><rect x="16" y="1" width="1.800" height="17" fill="#9e9cb6"/><rect x="4.500" y="2.500" width="10" height="6" fill="#fbe27a" stroke="#e8b860" stroke-width="0.800"/><rect x="4.500" y="11.500" width="10" height="5" fill="#dfe4f4" stroke="#a8b0d4" stroke-width="0.800"/></svg>
<svg class="a" style="left:683px;top:176px" width="20" height="20" viewBox="0 0 20 20"><rect x="1" y="1" width="17" height="1.800" fill="#9e9cb6"/><rect x="1" y="17" width="17" height="1.800" fill="#9e9cb6"/><rect x="3.500" y="4.500" width="5.500" height="11" fill="#fbe27a" stroke="#e8b860" stroke-width="0.800"/><rect x="10.500" y="4.500" width="5.500" height="11" fill="#dfe4f4" stroke="#a8b0d4" stroke-width="0.800"/></svg>
<svg class="a" style="left:722px;top:176px" width="20" height="20" viewBox="0 0 20 20"><rect x="1" y="1" width="1.800" height="17" fill="#303070"/><rect x="16" y="1" width="1.800" height="17" fill="#303070"/><rect x="4.500" y="2.500" width="10" height="7" fill="#f6c020" stroke="#b86818"/><rect x="4.500" y="11.500" width="10" height="5.500" fill="#a8d0f8" stroke="#1868c8"/><path d="M12 4l1.200 3 3-1.500-1.500 3 3 1.200-3 1.200 1.500 3-3-1.500-1.200 3-1.200-3-3 1.500 1.500-3-3-1.200 3-1.200-1.500-3 3 1.500z" fill="#fffbe0" stroke="#f0a020" stroke-width="1"/></svg>
<svg class="a" style="left:758px;top:174px" width="80" height="24" viewBox="758 174 80 24"><defs><linearGradient id="gb" x1="0" y1="0" x2="1" y2="1"><stop offset="0" stop-color="#b4bcd8"/><stop offset="1" stop-color="#e6e9f4"/></linearGradient></defs><path d="M762 186h5M764.500 183.500l2.700 2.500-2.700 2.500" stroke="#9a9cc0" stroke-width="1.700" fill="none"/><rect x="769.500" y="182.500" width="7" height="7" fill="url(#gb)" stroke="#aab0d0"/><path d="M798 178v5M795.300 181l2.700 2.800 2.700-2.800" stroke="#9a9cc0" stroke-width="1.700" fill="none"/><rect x="794.500" y="185.500" width="7" height="7" fill="url(#gb)" stroke="#aab0d0"/><path d="M818.500 179.500l6 6M824.800 181v4.800h-4.800" stroke="#9a9cc0" stroke-width="1.700" fill="none"/><rect x="825.500" y="186.500" width="7" height="7" fill="url(#gb)" stroke="#aab0d0"/></svg>
<svg class="a" style="left:852px;top:174px" width="80" height="24" viewBox="852 174 80 24"><path d="M856.500 179.500l6 6M862.800 181v4.800h-4.800" stroke="#7c60c0" stroke-width="1.800" fill="none"/><rect x="863.500" y="186.500" width="6" height="5.500" fill="#d4e6f8" stroke="#6aa4e4"/><rect x="866.500" y="188.500" width="5.500" height="5.500" fill="#d4e6f8" stroke="#6aa4e4"/><path d="M867.500 180.500h5M870 178v5" stroke="#444" stroke-width="1"/><rect x="887.500" y="183.500" width="9" height="8.500" fill="#c0d8f4" stroke="#6aa4e4" stroke-width="1.100"/><path d="M888 188.500h5v-5" stroke="#6aa4e4" fill="none"/><path d="M895 180.500h5M897.500 178v5" stroke="#444" stroke-width="1"/><rect x="913.500" y="184.500" width="14.500" height="6" fill="#c4dcf6" stroke="#6aa4e4" stroke-width="1.100"/><path d="M916 187.500h8.500M922 185.300l2.800 2.200-2.800 2.200" stroke="#555" stroke-width="1.100" fill="none"/></svg>
<svg class="a" style="left:948px;top:174px" width="112" height="24" viewBox="948 174 112 24"><path d="M955.94 180.26L957.46 180.26L957.73 181.66L958.33 181.90L959.51 181.11L960.59 182.19L959.80 183.37L960.04 183.97L961.44 184.24L961.44 185.76L960.04 186.03L959.80 186.63L960.59 187.81L959.51 188.89L958.33 188.10L957.73 188.34L957.46 189.74L955.94 189.74L955.67 188.34L955.07 188.10L953.89 188.89L952.81 187.81L953.60 186.63L953.36 186.03L951.96 185.76L951.96 184.24L953.36 183.97L953.60 183.37L952.81 182.19L953.89 181.11L955.07 181.90L955.67 181.66z" fill="#fbfbfb" stroke="#a8a8a8" stroke-width="0.900" stroke-linejoin="round"/><circle cx="956.700" cy="185" r="1.600" fill="#f0f0f0" stroke="#a8a8a8" stroke-width="0.900"/><path d="M963.0 184.5h1.400v1.900h1.900v1.400h-1.900v1.900h-1.400v-1.900h-1.900v-1.400h1.900z" fill="#f6eaa8" stroke="#5a5a5a" stroke-width="0.700"/><rect x="961.1" y="191.6" width="5.200" height="1.500" fill="#f6eaa8" stroke="#5a5a5a" stroke-width="0.700"/><circle cx="984.800" cy="185" r="3.900" fill="none" stroke="#d0d0d0" stroke-width="1.500" stroke-dasharray="1.700 1.360"/><path d="M980.500 180.500l8.500 9M989 180.500l-8.500 9" stroke="#e88c8c" stroke-width="2"/><path d="M990.6 184.5h1.400v1.900h1.900v1.400h-1.900v1.900h-1.400v-1.900h-1.900v-1.400h1.900z" fill="#f6eaa8" stroke="#5a5a5a" stroke-width="0.700"/><rect x="988.7" y="191.6" width="5.200" height="1.500" fill="#f6eaa8" stroke="#5a5a5a" stroke-width="0.700"/><path d="M1012.500 180h6l-3 3.500h3.500l-8 6.500 2.500-5h-3.500z" fill="#f6dc58" stroke="#e8c848" stroke-width="0.600"/><path d="M1018.6 184.5h1.400v1.900h1.900v1.400h-1.900v1.900h-1.400v-1.900h-1.900v-1.400h1.900z" fill="#f6eaa8" stroke="#5a5a5a" stroke-width="0.700"/><rect x="1016.7" y="191.6" width="5.200" height="1.500" fill="#f6eaa8" stroke="#5a5a5a" stroke-width="0.700"/><path d="M1038.500 181.500h8v7.500h-9z" fill="#e4eefa" stroke="#b8cce8" stroke-width="0.900"/><path d="M1037 189.500h9" stroke="#a8c0e0" stroke-width="1.200"/><path d="M1046.9 184.5h1.400v1.900h1.900v1.400h-1.900v1.900h-1.400v-1.900h-1.900v-1.400h1.900z" fill="#f6eaa8" stroke="#5a5a5a" stroke-width="0.700"/><rect x="1045.0" y="191.6" width="5.200" height="1.500" fill="#f6eaa8" stroke="#5a5a5a" stroke-width="0.700"/></svg>
<svg class="a" style="left:1068px;top:174px" width="112" height="24" viewBox="1068 174 112 24"><rect x="1073.500" y="181.500" width="9" height="4.500" fill="#d4d4ec" stroke="#8888b0"/><path d="M1078 179v2.500" stroke="#e05060" stroke-width="1.500"/><path d="M1084.3 184.5h1.400v1.900h1.900v1.400h-1.900v1.900h-1.400v-1.900h-1.900v-1.400h1.900z" fill="#f6eaa8" stroke="#5a5a5a" stroke-width="0.700"/><rect x="1082.4" y="191.6" width="5.200" height="1.500" fill="#f6eaa8" stroke="#5a5a5a" stroke-width="0.700"/><rect x="1101.500" y="181.500" width="9" height="4.500" fill="#d4d4ec" stroke="#8888b0"/><path d="M1106 186v2.500" stroke="#e05060" stroke-width="1.500"/><path d="M1112.8 184.5h1.400v1.900h1.900v1.400h-1.900v1.900h-1.400v-1.900h-1.900v-1.400h1.900z" fill="#f6eaa8" stroke="#5a5a5a" stroke-width="0.700"/><rect x="1110.9" y="191.6" width="5.200" height="1.500" fill="#f6eaa8" stroke="#5a5a5a" stroke-width="0.700"/><rect x="1133.500" y="180.500" width="6" height="3" fill="#b4d0d0" stroke="#88acac"/><rect x="1133.500" y="188.500" width="6" height="3" fill="#b4d0d0" stroke="#88acac"/><path d="M1136.500 184v4.500" stroke="#f06060" stroke-width="1.200"/><rect x="1161.500" y="180.500" width="6" height="3" fill="#b4d0d0" stroke="#88acac"/><rect x="1161.500" y="188.500" width="6" height="3" fill="#b4d0d0" stroke="#88acac"/><path d="M1164.500 184v4.500" stroke="#f06060" stroke-width="1.200"/><path d="M1170.500 182c2.200 1.500 2.200 6.500 0 8" stroke="#444" stroke-width="1" fill="none"/><path d="M1169 182.800l2.800-2.300 0.400 3.300zM1169 189.200l2.800 2.300 0.400-3.300z" fill="#444"/></svg>
<svg class="a" style="left:1190px;top:174px" width="180" height="24" viewBox="1190 174 180 24"><rect x="1196.5" y="183.5" width="3" height="6" fill="#cdd1e8" stroke="#a4a8cc" stroke-width="1"/><rect x="1206.5" y="183.5" width="3" height="6" fill="#cdd1e8" stroke="#a4a8cc" stroke-width="1"/><path d="M1200 186.500h6" stroke="#888" stroke-width="1"/><path d="M1201.200 184.700l3.600 3.600M1204.800 184.700l-3.600 3.600" stroke="#e86070" stroke-width="1.100"/><rect x="1223.5" y="180.5" width="3" height="6" fill="#cdd1e8" stroke="#a4a8cc" stroke-width="1"/><rect x="1235.5" y="184.8" width="3" height="6" fill="#cdd1e8" stroke="#a4a8cc" stroke-width="1"/><path d="M1227 183.500h3.500v4h4.500" stroke="#555" fill="none"/><text x="1230.500" y="185" font-size="8.500" font-family="Liberation Sans,sans-serif" font-weight="bold" fill="#e05060">?</text><rect x="1261.5" y="179.5" width="3" height="6" fill="#cdd1e8" stroke="#a4a8cc" stroke-width="1"/><rect x="1273.5" y="186.5" width="3" height="6" fill="#cdd1e8" stroke="#a4a8cc" stroke-width="1"/><path d="M1265 182l8 8" stroke="#555" fill="none"/><rect x="1289.5" y="180.5" width="3" height="6" fill="#cdd1e8" stroke="#a4a8cc" stroke-width="1"/><rect x="1301.5" y="184.8" width="3" height="6" fill="#cdd1e8" stroke="#a4a8cc" stroke-width="1"/><path d="M1293 183.500h2l4.500 4h2" stroke="#555" fill="none"/><rect x="1317.5" y="180.5" width="3" height="6" fill="#cdd1e8" stroke="#a4a8cc" stroke-width="1"/><rect x="1329.9" y="184.8" width="3" height="6" fill="#cdd1e8" stroke="#a4a8cc" stroke-width="1"/><path d="M1321 183.500h3.500v4h5" stroke="#555" fill="none"/><rect x="1345.7" y="180.5" width="3" height="6" fill="#cdd1e8" stroke="#a4a8cc" stroke-width="1"/><rect x="1358.1" y="184.8" width="3" height="6" fill="#cdd1e8" stroke="#a4a8cc" stroke-width="1"/><path d="M1349 183.500h4.500v4h4.500" stroke="#555" fill="none"/></svg>
<div class="a" style="left:535px;top:203px;width:1175px;height:751px;background:#ffffff;"></div>
<div class="hl" style="left:534px;top:202px;width:1194px;background:#999999"></div>
<div class="vl" style="left:534px;top:202px;height:769px;background:#8e8e8e"></div>
<div class="a" style="left:1710px;top:203px;width:17px;height:751px;background:#f0f0f0;"></div>
<div class="a" style="left:1712px;top:370px;width:14px;height:407px;background:#cdcdcd;"></div>
<svg class="a" style="left:1716px;top:210px" width="7" height="4" viewBox="0 0 7 4"><path d="M0 4l3.500-4 3.500 4z" fill="#505050"/></svg>
<svg class="a" style="left:1716px;top:943px" width="7" height="4" viewBox="0 0 7 4"><path d="M0 0l3.500 4 3.500-4z" fill="#505050"/></svg>
<div class="a" style="left:535px;top:954px;width:1175px;height:17px;background:#f0f0f0;"></div>
<div class="a" style="left:553px;top:956px;width:960px;height:14px;background:#cdcdcd;"></div>
<svg class="a" style="left:541px;top:960px" width="4" height="7" viewBox="0 0 4 7"><path d="M4 0l-4 3.500 4 3.500z" fill="#505050"/></svg>
<svg class="a" style="left:1699px;top:960px" width="4" height="7" viewBox="0 0 4 7"><path d="M0 0l4 3.500-4 3.500z" fill="#505050"/></svg>
<div class="a" style="left:1710px;top:954px;width:17px;height:17px;background:#f0f0f0;"></div>
<div class="a" style="left:1727px;top:203px;width:2px;height:770px;background:#ffffff;"></div>
<div class="a" style="left:533px;top:971px;width:1196px;height:2px;background:#ffffff;"></div>
<div class="hl" style="left:532px;top:973px;width:1198px;background:#707070"></div>
<div class="a" style="left:0;top:0;width:1740px;height:1040px;clip-path:inset(203px 29px 86px 535px)">
<div class="node" style="left:975px;top:196px;width:64px;height:68px;background:#e9eef2">
</div>
<div class="a" style="left:965px;top:206px;width:5px;height:5px;background:#a8a8a8;"></div>
<div class="hl" style="left:970px;top:208px;width:5px;background:#b0b0b0"></div>
<div class="pin" style="left:978.5px;top:202px;letter-spacing:0.324px;">locator</div>
<div class="a" style="left:965px;top:222px;width:5px;height:5px;background:#a8a8a8;"></div>
<div class="hl" style="left:970px;top:224px;width:5px;background:#b0b0b0"></div>
<div class="pin" style="left:978.5px;top:218px;letter-spacing:-0.406px;">keys</div>
<div class="a" style="left:965px;top:238px;width:5px;height:5px;background:#000;"></div>
<div class="hl" style="left:970px;top:240px;width:5px;background:#000"></div>
<div class="pin" style="left:978.5px;top:234px;letter-spacing:0.458px;">timeout</div>
<div class="box" style="left:537px;top:201px;width:428px;height:15px;letter-spacing:0.448px;">//body/div[@class='pageContentDiv']/div...hSmallX']/table/tbody/tr/td[1]/div/input</div>
<div class="box" style="left:882px;top:217px;width:83px;height:15px;letter-spacing:0.153px;">mmustermann</div>
<svg class="a" style="left:996px;top:264px" width="7" height="43" viewBox="0 0 7 43"><path d="M3.500 0v10M3.500 32v11" stroke="#000"/><path d="M1 7h5l-2.500 3z" fill="#000"/><path d="M3.500 12v19" stroke="#000" stroke-dasharray="1 1"/><path d="M1 41h5l-2.500 2.700z" fill="#000"/></svg>
<div class="node" style="left:975px;top:307px;width:64px;height:96px;background:#e9eef2">
<div class="nh" style="height:27px;line-height:28px;font-size:11.5px;letter-spacing:-0.622px;">Send Keys</div>
</div>
<div class="a" style="left:965px;top:342px;width:5px;height:5px;background:#a8a8a8;"></div>
<div class="hl" style="left:970px;top:344px;width:5px;background:#b0b0b0"></div>
<div class="pin" style="left:978.5px;top:338px;letter-spacing:0.324px;">locator</div>
<div class="a" style="left:965px;top:358px;width:5px;height:5px;background:#a8a8a8;"></div>
<div class="hl" style="left:970px;top:360px;width:5px;background:#b0b0b0"></div>
<div class="pin" style="left:978.5px;top:354px;letter-spacing:-0.406px;">keys</div>
<div class="a" style="left:965px;top:374px;width:5px;height:5px;background:#000;"></div>
<div class="hl" style="left:970px;top:376px;width:5px;background:#000"></div>
<div class="pin" style="left:978.5px;top:370px;letter-spacing:0.458px;">timeout</div>
<div class="box" style="left:537px;top:337px;width:428px;height:15px;letter-spacing:0.448px;">//body/div[@class='pageContentDiv']/div...hSmallX']/table/tbody/tr/td[1]/div/input</div>
<div class="box" style="left:937px;top:353px;width:28px;height:15px;letter-spacing:-0.656px;">mm</div>
<svg class="a" style="left:996px;top:403px" width="7" height="43" viewBox="0 0 7 43"><path d="M3.500 0v10M3.500 32v11" stroke="#000"/><path d="M1 7h5l-2.500 3z" fill="#000"/><path d="M3.500 12v19" stroke="#000" stroke-dasharray="1 1"/><path d="M1 41h5l-2.500 2.700z" fill="#000"/></svg>
<div class="node" style="left:975px;top:446px;width:64px;height:80px;background:#e9eef2">
<div class="nh" style="height:27px;line-height:28px;font-size:11.5px;letter-spacing:-0.327px;">Click</div>
</div>
<div class="a" style="left:965px;top:486px;width:5px;height:5px;background:#a8a8a8;"></div>
<div class="hl" style="left:970px;top:488px;width:5px;background:#b0b0b0"></div>
<div class="pin" style="left:978.5px;top:482px;letter-spacing:0.324px;">locator</div>
<div class="a" style="left:965px;top:502px;width:5px;height:5px;background:#000;"></div>
<div class="hl" style="left:970px;top:504px;width:5px;background:#000"></div>
<div class="pin" style="left:978.5px;top:498px;letter-spacing:0.458px;">timeout</div>
<div class="box" style="left:537px;top:481px;width:428px;height:15px;letter-spacing:0.469px;">//body/div[@class='pageContentDiv']/div...able/tbody/tr[5]/td[@class='left']/input</div>
<svg class="a" style="left:996px;top:526px" width="7" height="42" viewBox="0 0 7 42"><path d="M3.500 0v10M3.500 31v11" stroke="#000"/><path d="M1 7h5l-2.500 3z" fill="#000"/><path d="M3.500 12v18" stroke="#000" stroke-dasharray="1 1"/><path d="M1 40h5l-2.500 2.700z" fill="#000"/></svg>
<div class="node" style="left:975px;top:568px;width:72px;height:80px;background:#e9eef2">
<div class="nh" style="height:27px;line-height:28px;font-size:11.5px;letter-spacing:-0.260px;">Get Text</div>
</div>
<div class="a" style="left:965px;top:606px;width:5px;height:5px;background:#a8a8a8;"></div>
<div class="hl" style="left:970px;top:608px;width:5px;background:#b0b0b0"></div>
<div class="pin" style="left:978.5px;top:602px;letter-spacing:0.324px;">locator</div>
<div class="a" style="left:965px;top:622px;width:5px;height:5px;background:#000;"></div>
<div class="hl" style="left:970px;top:624px;width:5px;background:#000"></div>
<div class="pin" style="left:978.5px;top:618px;letter-spacing:0.458px;">timeout</div>
<div class="hl" style="left:1047px;top:608px;width:6px;background:#000"></div>
<div class="a" style="left:1052px;top:606px;width:5px;height:5px;background:#fff;border:1px solid #000"></div>
<div class="pin" style="left:1025.0px;top:602px;letter-spacing:0.188px;">text</div>
<div class="box" style="left:537px;top:601px;width:428px;height:15px;letter-spacing:0.386px;">//body/div[@class='pageContentDiv']/div...SelectBox center']/table/tbody/tr[1]/th</div>
<svg class="a" style="left:996px;top:648px" width="7" height="64" viewBox="0 0 7 64"><path d="M3.500 0v10M3.500 53v11" stroke="#000"/><path d="M1 7h5l-2.500 3z" fill="#000"/><path d="M3.500 12v40" stroke="#000" stroke-dasharray="1 1"/><path d="M1 62h5l-2.500 2.700z" fill="#000"/></svg>
<div class="hl" style="left:1057px;top:608px;width:269px;background:#000"></div>
<div class="node" style="left:1335px;top:552px;width:88px;height:96px;background:#e9eef2">
<div class="nh" style="height:27px;line-height:28px;font-size:11.5px;letter-spacing:-0.233px;">Assert [ Equal ]</div>
</div>
<div class="a" style="left:1325px;top:590px;width:5px;height:5px;background:#a8a8a8;"></div>
<div class="hl" style="left:1330px;top:592px;width:5px;background:#b0b0b0"></div>
<div class="pin" style="left:1338.5px;top:586px;letter-spacing:0.039px;">expected</div>
<div class="a" style="left:1325px;top:606px;width:5px;height:5px;background:#fff;border:1px solid #000"></div>
<div class="hl" style="left:1330px;top:608px;width:5px;background:#000"></div>
<div class="pin" style="left:1338.5px;top:602px;letter-spacing:0.104px;">actual</div>
<div class="a" style="left:1325px;top:622px;width:5px;height:5px;background:#000;"></div>
<div class="hl" style="left:1330px;top:624px;width:5px;background:#000"></div>
<div class="pin" style="left:1338.5px;top:618px;letter-spacing:-0.237px;">message</div>
<div class="box" style="left:1246px;top:585px;width:79px;height:15px;letter-spacing:0.382px;">'Projektfilter:'</div>
<div class="node" style="left:975px;top:712px;width:144px;height:112px;background:#e9eef2">
<div class="nh" style="height:27px;line-height:28px;font-size:11.5px;letter-spacing:0.104px;">Check Attribute</div>
</div>
<div class="a" style="left:965px;top:750px;width:5px;height:5px;background:#a8a8a8;"></div>
<div class="hl" style="left:970px;top:752px;width:5px;background:#b0b0b0"></div>
<div class="pin" style="left:978.5px;top:746px;letter-spacing:0.324px;">locator</div>
<div class="a" style="left:965px;top:766px;width:5px;height:5px;background:#a8a8a8;"></div>
<div class="hl" style="left:970px;top:768px;width:5px;background:#b0b0b0"></div>
<div class="pin" style="left:978.5px;top:762px;letter-spacing:0.298px;">attributeName</div>
<div class="a" style="left:965px;top:782px;width:5px;height:5px;background:#a8a8a8;"></div>
<div class="hl" style="left:970px;top:784px;width:5px;background:#b0b0b0"></div>
<div class="pin" style="left:978.5px;top:778px;letter-spacing:0.167px;">expectedValue</div>
<div class="a" style="left:965px;top:798px;width:5px;height:5px;background:#000;"></div>
<div class="hl" style="left:970px;top:800px;width:5px;background:#000"></div>
<div class="pin" style="left:978.5px;top:794px;letter-spacing:0.458px;">timeout</div>
<div class="hl" style="left:1119px;top:752px;width:6px;background:#000"></div>
<div class="a" style="left:1124px;top:750px;width:5px;height:5px;background:#fff;border:1px solid #000"></div>
<div class="pin" style="left:1079.1px;top:746px;letter-spacing:0.044px;">isEqual</div>
<div class="hl" style="left:1119px;top:768px;width:6px;background:#000"></div>
<div class="a" style="left:1124px;top:766px;width:5px;height:5px;background:#fff;border:1px solid #000"></div>
<div class="pin" style="left:1060.0px;top:762px;letter-spacing:0.228px;">isNotEqual</div>
<div class="box" style="left:537px;top:745px;width:428px;height:15px;letter-spacing:0.433px;">//body/div[@class='pageContentDiv']/div[...iv/div[1]/table/tbody/tr/td[1]/div/input</div>
<div class="box" style="left:933px;top:761px;width:32px;height:15px;letter-spacing:0.222px;">type</div>
<div class="box" style="left:936px;top:777px;width:29px;height:15px;letter-spacing:0.237px;">text</div>
<div class="node" style="left:1263px;top:824px;width:80px;height:57px;background:#ffdcaa">
<div class="nh" style="height:27px;line-height:28px;font-size:11.5px;letter-spacing:-0.785px;">FAIL</div>
</div>
<div class="a" style="left:1253px;top:862px;width:5px;height:5px;background:#000;"></div>
<div class="hl" style="left:1258px;top:864px;width:5px;background:#000"></div>
<div class="pin" style="left:1266.5px;top:858px;letter-spacing:0.119px;">errorMessage</div>
<svg class="a" style="left:1247px;top:808px" width="14" height="14" viewBox="1247 808 14 14"><path d="M1253.10 810.06L1254.70 810.06L1254.99 811.47L1255.63 811.73L1256.83 810.95L1257.95 812.07L1257.17 813.27L1257.43 813.91L1258.84 814.20L1258.84 815.80L1257.43 816.09L1257.17 816.73L1257.95 817.93L1256.83 819.05L1255.63 818.27L1254.99 818.53L1254.70 819.94L1253.10 819.94L1252.81 818.53L1252.17 818.27L1250.97 819.05L1249.85 817.93L1250.63 816.73L1250.37 816.09L1248.96 815.80L1248.96 814.20L1250.37 813.91L1250.63 813.27L1249.85 812.07L1250.97 810.95L1252.17 811.73L1252.81 811.47z" fill="#e2e2e2" stroke="#585858" stroke-width="0.800" stroke-linejoin="round"/><circle cx="1253.900" cy="815" r="1.600" fill="#fff" stroke="#585858" stroke-width="0.900"/></svg>
</div>
<div class="a" style="left:1002px;top:976px;width:125px;height:22px;border:1px solid #000;background:#f0f0f0;text-align:center;line-height:20px;letter-spacing:-0.067px;">Übernehmen</div>
<div class="a" style="left:1132px;top:976px;width:125px;height:22px;border:1px solid #000;background:#f0f0f0;text-align:center;line-height:20px;letter-spacing:-0.192px;">Verwerfen</div>
<div class="hl" style="left:8px;top:1005px;width:1723px;background:#707070"></div>
<div class="hl" style="left:8px;top:1006px;width:1723px;background:#f8f8f8"></div>
<div class="hl" style="left:8px;top:1007px;width:1723px;background:#909090"></div>
<div class="vl" style="left:8px;top:1008px;height:22px;background:#a0a0a0"></div>
<div class="hl" style="left:8px;top:1031px;width:1724px;background:#ffffff"></div>
<div class="hl" style="left:9px;top:1030px;width:836px;background:#ffffff"></div>
<div class="vl" style="left:844px;top:1007px;height:24px;background:#d8d8d8"></div>
<div class="vl" style="left:845px;top:1007px;height:24px;background:#ffffff"></div>
<div class="a" style="left:845px;top:1007px;width:8px;height:24px;background:#f5f5f5;"></div>
<div class="vl" style="left:853px;top:1007px;height:24px;background:#a0a0a0"></div>
<div class="t" style="left:858px;top:1013px;letter-spacing:-0.012px;">Login</div>
<div class="vl" style="left:1664px;top:1007px;height:24px;background:#8e8e8e"></div>
<div class="vl" style="left:1663px;top:1007px;height:24px;background:#ffffff"></div>
<div class="vl" style="left:1690px;top:1007px;height:24px;background:#8e8e8e"></div>
<div class="vl" style="left:1689px;top:1007px;height:24px;background:#ffffff"></div>
<div class="vl" style="left:1715px;top:1007px;height:23px;background:#ffffff"></div>
<div class="vl" style="left:1716px;top:1007px;height:23px;background:#c8c8c8"></div>
<svg class="a" style="left:1669px;top:1011px" width="16" height="16" viewBox="0 0 16 16"><defs><linearGradient id="led" x1="0" y1="0" x2="0" y2="1"><stop offset="0" stop-color="#f6f6f6"/><stop offset="0.280" stop-color="#ffffff"/><stop offset="0.480" stop-color="#b6b6b6"/><stop offset="0.750" stop-color="#dedede"/><stop offset="1" stop-color="#f4f4f4"/></linearGradient><radialGradient id="led2" cx="0.5" cy="0.5" r="0.5"><stop offset="0.550" stop-color="#000" stop-opacity="0"/><stop offset="1" stop-color="#000" stop-opacity="0.380"/></radialGradient></defs><circle cx="8" cy="7.900" r="7.100" fill="url(#led)"/><ellipse cx="8" cy="7.900" rx="7.100" ry="7.100" fill="url(#led2)"/><ellipse cx="8" cy="3.500" rx="4.500" ry="2.600" fill="#fff" opacity="0.850"/><ellipse cx="8" cy="13" rx="3.500" ry="2" fill="#fff" opacity="0.700"/></svg>
<div class="a" style="left:1349px;top:719px;width:281px;height:283px;background:#f0f0f0;border:1px solid #979797;box-shadow:3px 3px 4px rgba(0,0,0,0.45)">
<div class="a" style="left:0;top:29px;width:279px;height:25px;background:#3399ff"></div>
<div class="mi" style="top:2px;color:#000;letter-spacing:-0.093px;">Rückgängig (Neuer Schritt)</div>
<div class="mk" style="top:2px;color:#000;letter-spacing:0.002px;">Ctrl+z</div>
<div class="hl" style="left:2px;top:23px;width:276px;background:#8e8e8e"></div><div class="hl" style="left:2px;top:24px;width:276px;background:#fdfdfd"></div>
<div class="mi" style="top:34px;color:#fff;letter-spacing:-0.144px;">Neuer Schritt...</div>
<div class="mk" style="top:34px;color:#fff;letter-spacing:0.173px;">Ctrl+n</div>
<div class="mi" style="top:56px;color:#000;letter-spacing:0.054px;">Neue Aktion</div>
<div class="hl" style="left:2px;top:77px;width:276px;background:#8e8e8e"></div><div class="hl" style="left:2px;top:78px;width:276px;background:#fdfdfd"></div>
<div class="mi" style="top:85px;color:#000;letter-spacing:0.028px;">Anmerkung einfügen...</div>
<div class="mk" style="top:85px;color:#000;letter-spacing:0.231px;">Ctrl+t</div>
<div class="mi" style="top:104px;color:#000;letter-spacing:-0.145px;">Legende einfügen...</div>
<div class="mi" style="top:123px;color:#000;letter-spacing:-0.108px;">Graphik einfügen...</div>
<div class="mk" style="top:123px;color:#000;letter-spacing:0.173px;">Ctrl+g</div>
<div class="hl" style="left:2px;top:144px;width:276px;background:#8e8e8e"></div><div class="hl" style="left:2px;top:145px;width:276px;background:#fdfdfd"></div>
<div class="mi" style="top:155px;color:#6d6d6d;letter-spacing:-0.173px;">Ausschneiden</div>
<div class="mk" style="top:155px;color:#6d6d6d;letter-spacing:0.002px;">Ctrl+x</div>
<div class="mi" style="top:177px;color:#6d6d6d;letter-spacing:-0.254px;">Kopieren</div>
<div class="mk" style="top:177px;color:#6d6d6d;letter-spacing:0.119px;">Ctrl+c</div>
<div class="mi" style="top:196px;color:#6d6d6d;letter-spacing:-0.170px;">Einfügen</div>
<div class="mk" style="top:196px;color:#6d6d6d;letter-spacing:0.119px;">Ctrl+v</div>
<div class="hl" style="left:2px;top:217px;width:276px;background:#8e8e8e"></div><div class="hl" style="left:2px;top:218px;width:276px;background:#fdfdfd"></div>
<div class="mi" style="top:225px;color:#000;letter-spacing:-0.048px;">Alle Verbindungen neu berechnen</div>
<div class="mi" style="top:244px;color:#000;letter-spacing:0.201px;">Autolayout</div>
<div class="mi" style="top:263px;color:#000;letter-spacing:-0.210px;">Refaktorieren</div>
<svg class="a" style="left:2px;top:33px" width="24" height="18" viewBox="0 0 24 18"><rect x="0.700" y="2.200" width="15" height="14.200" fill="#fff" stroke="#222" stroke-width="1.300"/><rect x="1" y="2" width="14.500" height="2.600" fill="#6a78b8"/><rect x="1" y="1.600" width="14.500" height="0.900" fill="#222"/><rect x="3" y="11.500" width="2" height="2" fill="#222"/><rect x="6.500" y="11.500" width="2" height="2" fill="#222"/><rect x="10" y="11.500" width="2" height="2" fill="#222"/><path d="M16.7 0.40000000000000036l1.4 3.0 3.2 0.5-2.3 2.3 0.7 3.4-3.0-1.8-3.0 1.8 0.7-3.4-2.3-2.3 3.2-0.5z" fill="#ffe270" stroke="#e8b448" stroke-width="0.6"/></svg>
<svg class="a" style="left:10px;top:155px" width="14" height="18" viewBox="0 0 14 18"><path d="M4.300 1.500l3 9.500M8.700 1.500l-3 9.500" stroke="#a4a4b0" stroke-width="1.500"/><ellipse cx="3.800" cy="13" rx="2.300" ry="2.700" fill="#c0ccf4" stroke="#94a4e0" stroke-width="1.300"/><ellipse cx="9" cy="13" rx="2.300" ry="2.700" fill="#c0ccf4" stroke="#94a4e0" stroke-width="1.300"/></svg>
<svg class="a" style="left:263px;top:59px" width="12" height="14" viewBox="0 0 12 14"><path d="M2 0v10l5-5z" fill="#f8f8f8"/><path d="M3 12.500l6-5.500" stroke="#555" stroke-width="1"/></svg>
<svg class="a" style="left:263px;top:266px" width="12" height="14" viewBox="0 0 12 14"><path d="M2 0v10l5-5z" fill="#f8f8f8"/><path d="M3 12.500l6-5.500" stroke="#555" stroke-width="1"/></svg>
</div>
<div class="vl" style="left:1731px;top:31px;height:1001px;background:#a4a4a4"></div>
</body></html>
